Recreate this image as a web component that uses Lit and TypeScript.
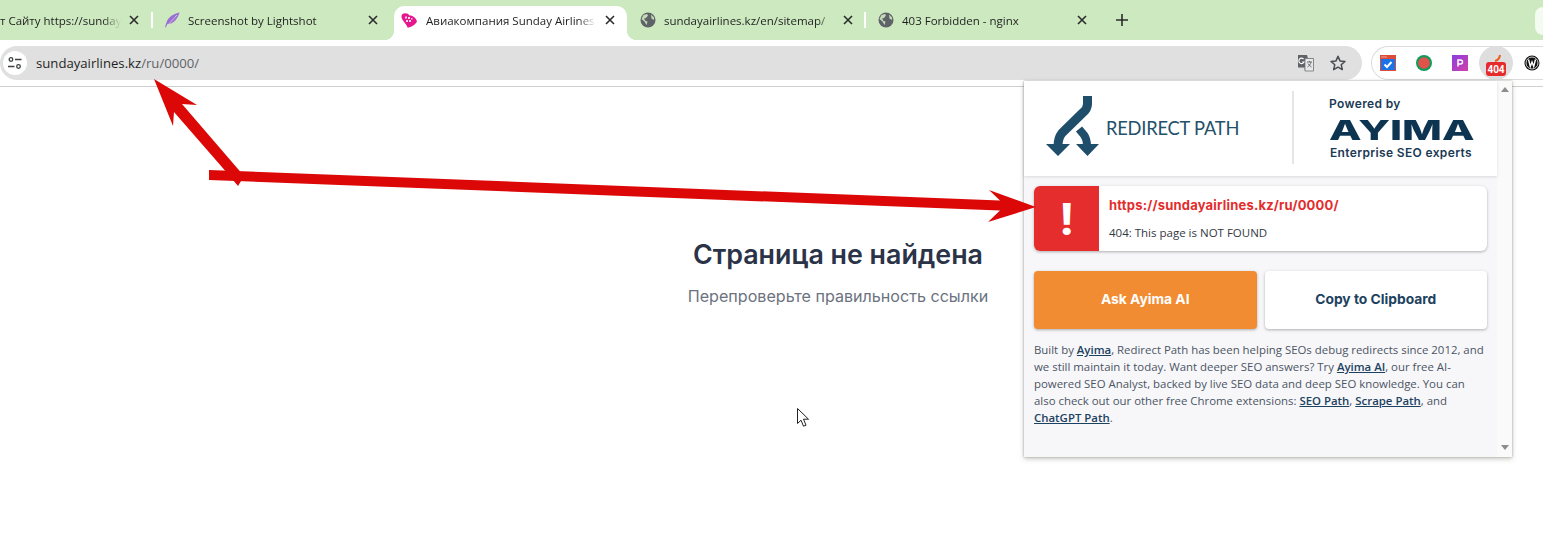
import { html, css, svg, LitElement } from 'lit';
import { customElement } from 'lit/decorators.js';

const globe = svg`<circle cx="8" cy="8" r="7.500" fill="#5f6368"/><path d="M3.500 3 7 2 8 3.500 6 6 4 6.500 5.500 9 7.500 9.500 6.500 13 4.500 9.500 1.500 7ZM11 2.500 14 5.500 14 8 11.500 6.500Z" fill="#c3dcb8"/>`;
const feather = svg`<path d="M15.500.5C10 1.500 4 5 2.500 10.500L1 15l1 .5 1.500-3.500C8 12.500 13.500 8 15.500.5Z" fill="#9a6fd0"/><path d="M13 3 2 15" stroke="#e6d8f5" stroke-width=".7"/>`;
const sunday = svg`<path d="M1 2.500C3.500.5 7 1 8.500 3.500 11 3 15 5.500 16 9.500c-2 3.500-6 6-9.500 6C6 13 3.500 11 2 8.500.5 6.500 0 4 1 2.500Z" fill="#e6168c"/><path d="M4 4.500h2v2H4zM7 5h2v2H7zM5 8h2v2H5zM8 8h2v2H8zM10 6h1.500v1.500H10z" fill="#fbd3e8"/>`;

interface Tab {
  title: string;
  icon?: unknown;
  kind: string;
  active?: boolean;
  sep?: boolean;
}

const TABS: Tab[] = [
  { title: 'т Сайту https://sundayairlines.kz', kind: 't1', sep: true },
  { title: 'Screenshot by Lightshot', icon: feather, kind: 't2' },
  { title: 'Авиакомпания Sunday Airlines', icon: sunday, kind: 't3', active: true },
  { title: 'sundayairlines.kz/en/sitemap/', icon: globe, kind: 't4', sep: true },
  { title: '403 Forbidden - nginx', icon: globe, kind: 't5' },
];

@customElement('app-root')
export default class AppRoot extends LitElement {
  static styles = css`
    :host {
      display: block;
      width: 1543px;
      height: 551px;
      overflow: hidden;
      background: #fff;
      font-family: "Open Sans", "Noto Sans", sans-serif;
      color: #1f1f1f;
    }

    /* tab strip */
    .tabstrip {
      display: flex;
      height: 40px;
      padding-top: 6px;
      box-sizing: border-box;
      background: #cce9bf;
      position: relative;
    }
    .tab {
      flex: none;
      display: flex;
      align-items: center;
      gap: 8px;
      height: 34px;
      padding-bottom: 6px;
      box-sizing: border-box;
      position: relative;
      font-size: 11.500px;
    }
    .t1 { width: 153px; padding-right: 14px; }
    .t2 { width: 241px; padding-left: 11px; padding-right: 16px; }
    .t3 { width: 233px; padding-left: 7px; padding-right: 12px; gap: 9px; }
    .t4 { width: 239px; padding-left: 13px; padding-right: 13px; }
    .t5 { width: 234px; padding-left: 12px; padding-right: 13px; }
    .tab.sep::after {
      content: '';
      position: absolute;
      right: 0;
      top: 6px;
      width: 2px;
      height: 16px;
      background: #fff;
    }
    .tab.active {
      background: #fff;
      border-radius: 10px 10px 0 0;
    }
    .tab.active::before,
    .tab.active::after {
      content: '';
      position: absolute;
      bottom: 0;
      width: 10px;
      height: 10px;
    }
    .tab.active::before {
      left: -10px;
      background: radial-gradient(circle at 0 0, transparent 10px, #fff 10.500px);
    }
    .tab.active::after {
      right: -10px;
      background: radial-gradient(circle at 100% 0, transparent 10px, #fff 10.500px);
    }
    .favicon { flex: none; width: 16px; height: 16px; }
    .title {
      flex: 1;
      min-width: 0;
      white-space: nowrap;
      overflow: hidden;
      -webkit-mask-image: linear-gradient(to left, transparent 0, #000 18px);
      mask-image: linear-gradient(to left, transparent 0, #000 18px);
    }
    .close { flex: none; width: 10px; height: 10px; }
    .plus { width: 12px; height: 12px; margin: 8px 0 0 16px; flex: none; }
    .caption-btn {
      position: absolute;
      right: -20px;
      top: 7px;
      width: 28px;
      height: 28px;
      border-radius: 8px;
      background: #f4fbf0;
    }

    /* toolbar */
    .toolbar {
      display: flex;
      align-items: center;
      height: 47px;
      padding-top: 6px;
      padding-bottom: 6px;
      box-sizing: border-box;
      border-bottom: 1px solid #cfcfcf;
    }
    .omnibox {
      flex: none;
      width: 1362px;
      height: 34px;
      display: flex;
      align-items: center;
      background: #e0e0e0;
      border-radius: 17px;
      padding: 0 15px 0 3px;
      box-sizing: border-box;
    }
    .site-btn {
      flex: none;
      width: 24px;
      height: 24px;
      border-radius: 50%;
      background: #fff;
      display: flex;
      align-items: center;
      justify-content: center;
      margin-right: 9px;
    }
    .url { flex: 1; font-size: 13.150px; }
    .url span { color: #5f6368; }
    .omni-icon { flex: none; width: 18px; height: 18px; }
    .omni-icon + .omni-icon { margin-left: 14px; }
    .extensions {
      flex: none;
      display: flex;
      align-items: center;
      height: 34px;
      width: 190px;
      margin-left: 9px;
      box-sizing: border-box;
      border: 1px solid #dcdcdc;
      border-right: none;
      border-radius: 17px 0 0 17px;
    }
    .ext {
      flex: none;
      width: 36px;
      height: 34px;
      display: flex;
      align-items: center;
      justify-content: center;
      position: relative;
    }
    .ext:first-child { margin-left: -2px; }
    .ext.on::before {
      content: '';
      position: absolute;
      left: 1px;
      top: 0;
      width: 34px;
      height: 34px;
      border-radius: 50%;
      background: #dedede;
    }
    .ext svg { position: relative; }
    .badge {
      position: absolute;
      left: 8px;
      top: 16px;
      width: 20px;
      height: 14px;
      border-radius: 3px;
      background: #e52b2b;
      color: #fff;
      font: 700 10px/15px "Roboto", sans-serif;
      text-align: center;
    }
    .arc { margin-top: -8px; }

    /* page */
    .page {
      position: relative;
      height: 464px;
      padding: 151px 0 0 133px;
      box-sizing: border-box;
      text-align: center;
      font-family: "Inter", sans-serif;
    }
    h1 {
      margin: 0;
      font-size: 26.800px;
      font-weight: 600;
      line-height: 32px;
      color: #2a3347;
    }
    .hint {
      margin: 16px 0 0;
      font-size: 16.100px;
      line-height: 20px;
      color: #6b7280;
    }
    .overlay {
      position: absolute;
      left: 0;
      top: 0;
      overflow: visible;
      pointer-events: none;
    }

    /* extension popup */
    .popup {
      position: absolute;
      left: 1024px;
      top: -6px;
      width: 488px;
      height: 376px;
      display: flex;
      text-align: left;
      background: #fafafa;
      box-shadow: 0 0 2px rgba(90, 100, 80, .5), 0 2px 5px rgba(90, 100, 80, .3);
      font-family: "Open Sans", "Noto Sans", sans-serif;
    }
    .popup-body {
      flex: none;
      width: 473px;
      background: #f7f7fa;
    }
    .scrollbar {
      flex: 1;
      display: flex;
      flex-direction: column;
      justify-content: space-between;
      align-items: center;
      padding: 6px 0 7px;
    }
    .scroll-up, .scroll-down {
      width: 0;
      height: 0;
      border-left: 4.500px solid transparent;
      border-right: 4.500px solid transparent;
    }
    .scroll-up { border-bottom: 5px solid #8c8c8c; }
    .scroll-down { border-top: 5px solid #8c8c8c; }
    .popup-head {
      display: flex;
      align-items: center;
      height: 95px;
      background: #fff;
      box-shadow: 0 1px 3px rgba(0, 0, 0, .12);
      position: relative;
    }
    .brand {
      flex: none;
      width: 270px;
      height: 73px;
      margin-top: -2px;
      display: flex;
      align-items: center;
      box-sizing: border-box;
      padding-left: 22px;
      border-right: 2px solid #e3e5e6;
    }
    .brand svg { flex: none; margin: -4px 7px 0 0; }
    .brand-name {
      font: 400 18.300px/1 "Lato", sans-serif;
      color: #245069;
      letter-spacing: -0.2px;
      margin-top: 2px;
    }
    .powered {
      display: flex;
      flex-direction: column;
      margin-left: 35px;
      font: 600 12px/16px "Inter", sans-serif;
      color: #1b3a55;
      letter-spacing: .35px;
    }
    .powered span:last-child { margin-left: 1px; }
    .ayima {
      font: 800 27.500px/26px "Inter", sans-serif;
      color: #0d3450;
      letter-spacing: 0;
      transform: scaleX(1.54);
      transform-origin: 0 50%;
      height: 26px;
      margin: 5px 0 2px;
    }
    .content { padding: 10px 10px 0; }
    .result {
      display: flex;
      height: 65px;
      background: #fff;
      border-radius: 6px;
      box-shadow: 0 1px 3px rgba(0, 0, 0, .3);
    }
    .status {
      flex: none;
      width: 65px;
      box-sizing: border-box;
      padding-top: 2px;
      background: #e52d2d;
      border-radius: 6px 0 0 6px;
      display: flex;
      align-items: center;
      justify-content: center;
      color: #fff;
      font: 900 44px/1 "Roboto", sans-serif;
    }
    .result-text { padding: 9px 10px; }
    .result-url {
      font: 700 13px/20px "Inter", sans-serif;
      color: #e32c2c;
      letter-spacing: .2px;
    }
    .result-msg {
      margin-top: 9px;
      font-size: 11.500px;
      line-height: 17px;
      color: #33383f;
    }
    .actions {
      display: flex;
      gap: 8px;
      margin-top: 20px;
    }
    .btn {
      flex: 1;
      height: 58px;
      display: flex;
      align-items: center;
      justify-content: center;
      border-radius: 4px;
      font: 700 13.800px/1 "Inter", sans-serif;
      box-shadow: 0 1px 3px rgba(0, 0, 0, .3);
    }
    .btn.ask { background: #f28c33; color: #fff; }
    .btn.copy { background: #fff; color: #1d4260; }
    .blurb {
      margin: 12px 0 0;
      font-size: 11.420px;
      line-height: 17px;
      color: #4b5563;
      width: 453px;
    }
    .blurb a {
      color: #1d4260;
      font-weight: 600;
      text-decoration: underline;
    }
  `;

  private renderTab(t: Tab) {
    return html`
      <div class="tab ${t.kind} ${t.active ? 'active' : ''} ${t.sep ? 'sep' : ''}">
        ${t.icon ? html`<svg class="favicon" viewBox="0 0 16 16">${t.icon}</svg>` : ''}
        <span class="title">${t.title}</span>
        <svg class="close" viewBox="0 0 10 10"><path d="M1 1l8 8M9 1 1 9" stroke="#2b2b2b" stroke-width="1.600"/></svg>
      </div>
    `;
  }

  render() {
    return html`
      <div class="tabstrip">
        ${TABS.map((t) => this.renderTab(t))}
        <svg class="plus" viewBox="0 0 12 12"><path d="M6 0v12M0 6h12" stroke="#2b2b2b" stroke-width="1.600"/></svg>
        <div class="caption-btn"></div>
      </div>

      <div class="toolbar">
        <div class="omnibox">
          <div class="site-btn">
            <svg width="16" height="14" viewBox="0 0 16 14" fill="none" stroke="#3c4043" stroke-width="1.300">
              <circle cx="4" cy="3.500" r="1.800"/><path d="M8 3.500h6.500M1 10.500h6.500"/><circle cx="11.500" cy="10.500" r="1.800"/>
            </svg>
          </div>
          <div class="url">sundayairlines.kz<span>/ru/0000/</span></div>
          <svg class="omni-icon" viewBox="0 0 18 18">
            <path d="M1 1h9l1 3h5.500v13H8l-1-3H1Z" fill="#9aa0a6"/>
            <path d="M1 1h9l2 12H1Z" fill="#5f6368"/>
            <path d="M8 4.500h8.500V17H8Z" fill="#e8e8e8" stroke="#70757a" stroke-width=".8"/>
            <path d="M6.500 5a2.700 2.700 0 1 0 .5 3H5.300" fill="none" stroke="#fff" stroke-width="1.100"/>
            <path d="M10 8h5M12.500 7v1M14 8c-.5 2.500-2 4-3.500 5M11 9.500c.8 1.500 2 2.800 3.500 3.500" fill="none" stroke="#5f6368" stroke-width=".9"/>
          </svg>
          <svg class="omni-icon" viewBox="0 0 18 18">
            <path d="M9 2.300l2 4.600 5 .5-3.800 3.300 1.100 4.900L9 13.100l-4.300 2.500 1.100-4.900L2 7.400l5-.5Z" fill="none" stroke="#4a4d51" stroke-width="1.500" stroke-linejoin="round"/>
          </svg>
        </div>
        <div class="extensions">
          <div class="ext">
            <svg width="16" height="16" viewBox="0 0 16 16">
              <rect width="16" height="16" fill="#dd4b39"/>
              <rect x="1" y="4" width="14" height="11" fill="#1a73e8"/>
              <path d="M1.500 1.500h1v1h-1zM3.500 1.500h1v1h-1zM5.500 1.500h1v1h-1z" fill="#fff"/>
              <path d="M4.500 9.500l2.500 2.500 4.500-5" fill="none" stroke="#fff" stroke-width="2"/>
            </svg>
          </div>
          <div class="ext">
            <svg width="16" height="16" viewBox="0 0 16 16">
              <circle cx="8" cy="8" r="8" fill="#159a5c"/>
              <circle cx="8" cy="8" r="5.800" fill="#e0524b"/>
            </svg>
          </div>
          <div class="ext">
            <svg width="16" height="16" viewBox="0 0 16 16">
              <defs><linearGradient id="pg" x1="0" x2="1" y1="0" y2="1"><stop offset="0" stop-color="#8a3fe0"/><stop offset="1" stop-color="#d23fa8"/></linearGradient></defs>
              <rect width="16" height="16" fill="url(#pg)"/>
              <path d="M6 11.500V5H8.500a2 2 0 0 1 0 4H6" fill="none" stroke="#fff" stroke-width="1.500"/>
            </svg>
          </div>
          <div class="ext on">
            <svg class="arc" width="20" height="20" viewBox="0 0 20 20">
              <path d="M9 12c3-.8 4.500-2.500 5-6" fill="none" stroke="#e8601f" stroke-width="2"/>
            </svg>
            <div class="badge">404</div>
          </div>
          <div class="ext">
            <svg width="16" height="16" viewBox="0 0 16 16">
              <circle cx="8" cy="8" r="7.500" fill="#111"/>
              <circle cx="8" cy="8" r="6" fill="none" stroke="#fff" stroke-width=".8"/>
              <path d="M4.500 4.500 6.300 11.500 8 7l1.700 4.500L11.500 4.500" fill="none" stroke="#fff" stroke-width="1.400"/>
            </svg>
          </div>
        </div>
      </div>

      <div class="page">
        <h1>Страница не найдена</h1>
        <p class="hint">Перепроверьте правильность ссылки</p>

        <svg class="overlay" width="1543" height="464" viewBox="0 87 1543 464">
          <path d="M797.500 408.500v15l3.500-3.300 2.500 6 2.500-1-2.500-6h5Z" fill="#fff" stroke="#222" stroke-width="1"/>
        </svg>

        <div class="popup">
          <div class="popup-body">
            <div class="popup-head">
              <div class="brand">
                <svg width="53" height="60" viewBox="0 0 53 60" fill="none" stroke="#1f4e6b">
                  <path d="M41.500 0v8q0 5-5 9L16 37q-4 5-4 13" stroke-width="9"/>
                  <path d="M33 33l5 6q3 4 3 11" stroke-width="8"/>
                  <path d="M0 48h24L12 60ZM30 48h23L41.500 60Z" fill="#1f4e6b" stroke="none"/>
                </svg>
                <span class="brand-name">REDIRECT PATH</span>
              </div>
              <div class="powered">
                <span>Powered by</span>
                <span class="ayima">AYIMA</span>
                <span>Enterprise SEO experts</span>
              </div>
            </div>
            <div class="content">
              <div class="result">
                <div class="status">!</div>
                <div class="result-text">
                  <div class="result-url">https://sundayairlines.kz/ru/0000/</div>
                  <div class="result-msg">404: This page is NOT FOUND</div>
                </div>
              </div>
              <div class="actions">
                <div class="btn ask">Ask Ayima AI</div>
                <div class="btn copy">Copy to Clipboard</div>
              </div>
              <p class="blurb">
                Built by <a>Ayima</a>, Redirect Path has been helping SEOs debug redirects since 2012, and
                we still maintain it today. Want deeper SEO answers? Try <a>Ayima AI</a>, our free AI-powered
                SEO Analyst, backed by live SEO data and deep SEO knowledge. You can also check out our
                other free Chrome extensions: <a>SEO Path</a>, <a>Scrape Path</a>, and <a>ChatGPT Path</a>.
              </p>
            </div>
          </div>
          <div class="scrollbar">
            <div class="scroll-up"></div>
            <div class="scroll-down"></div>
          </div>
        </div>

        <svg class="overlay" width="1543" height="464" viewBox="0 87 1543 464">
          <polygon fill="#dc0808" points="154,79 197,105 182,104 244,176 238,186 228,174 174,112 173,126"/>
          <polygon fill="#dc0808" points="209,170 1000,200.500 989,190 1036,207 988,222 1000,210.500 209,180"/>
        </svg>
      </div>
    `;
  }
}
